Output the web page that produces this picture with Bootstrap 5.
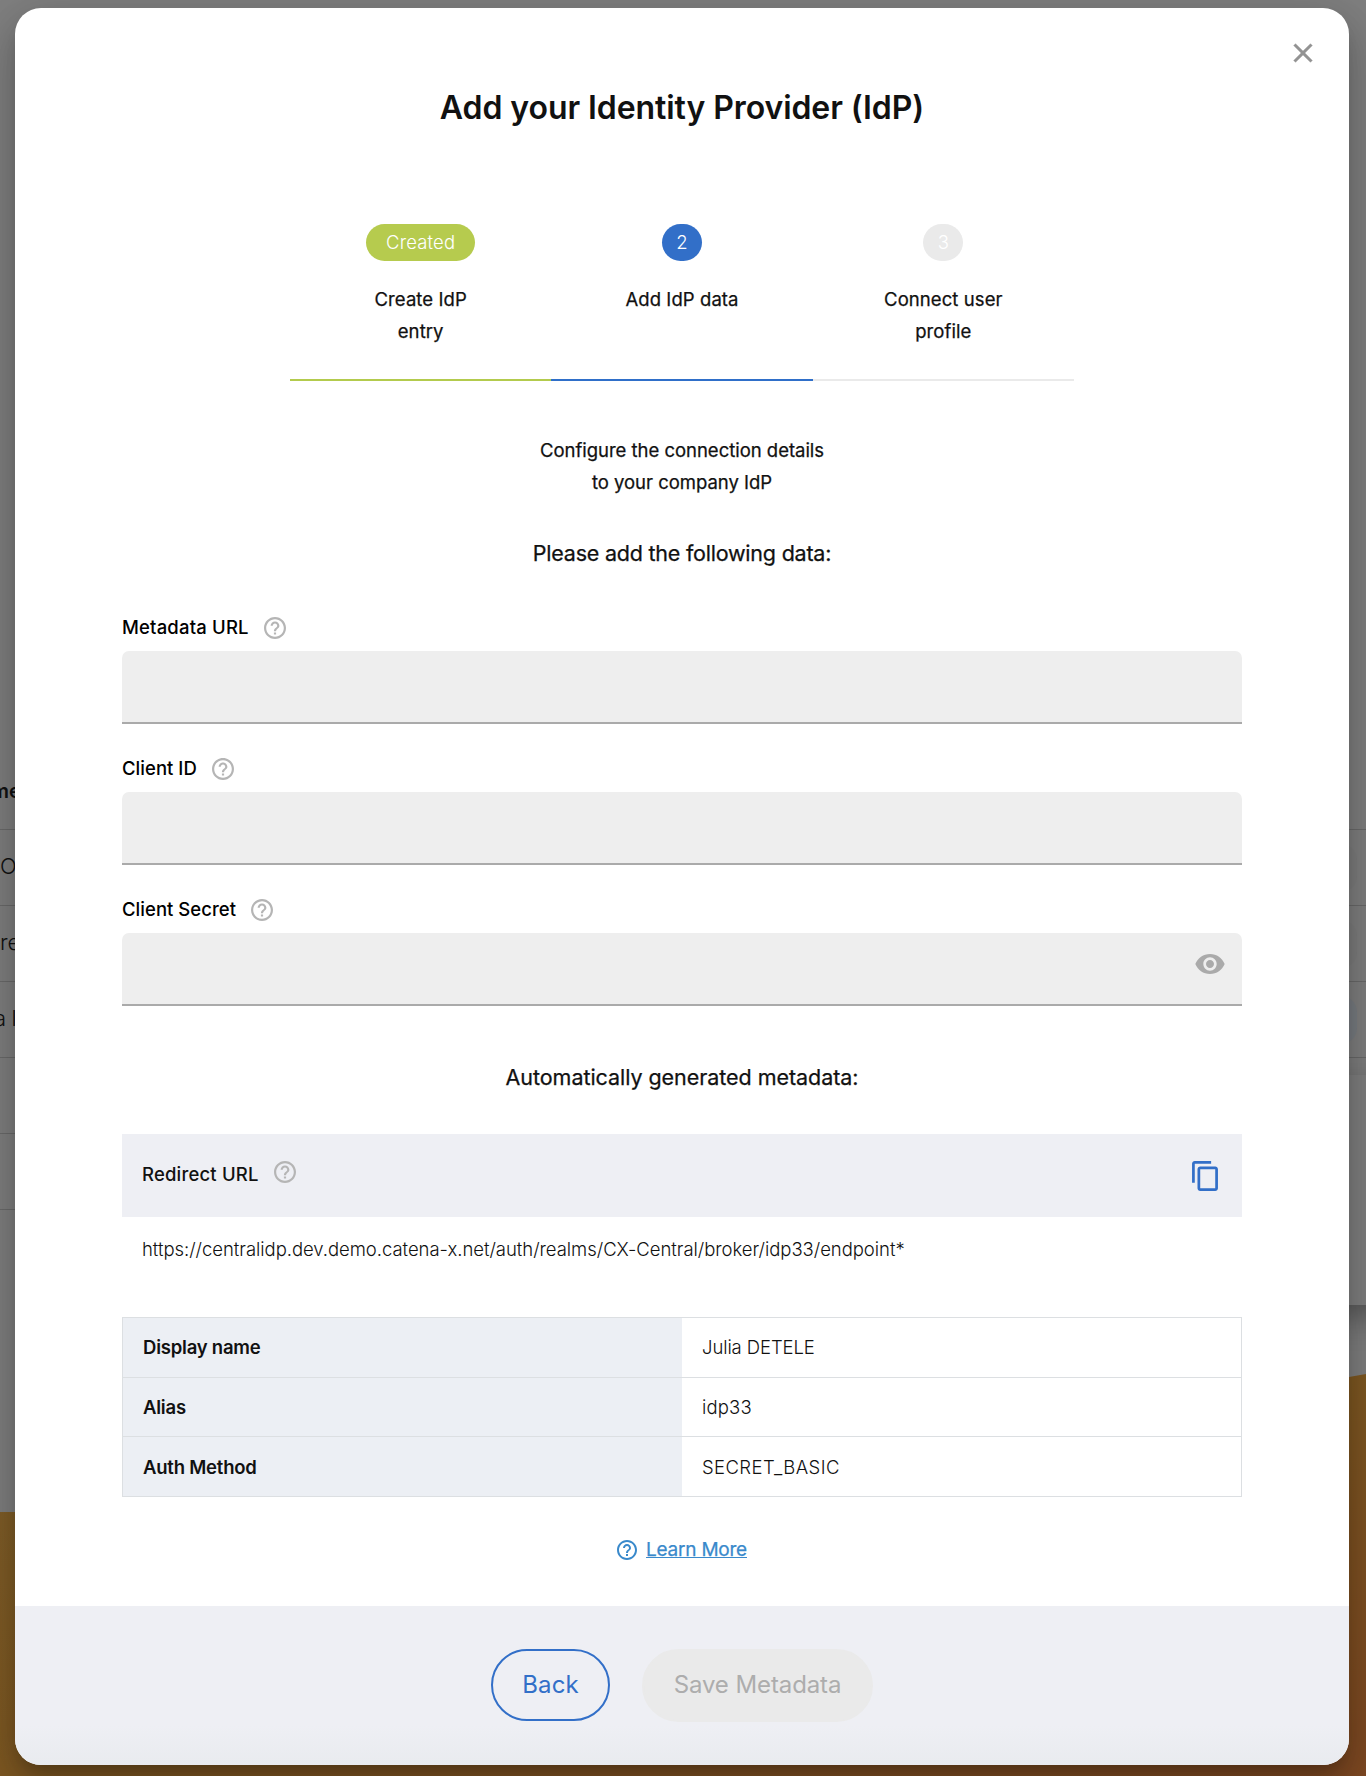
<!DOCTYPE html>
<html lang="en">
<head>
<meta charset="utf-8">
<meta name="viewport" content="width=device-width, initial-scale=1">
<title>Add your Identity Provider (IdP)</title>
<link href="https://cdn.jsdelivr.net/npm/bootstrap@5.3.0/dist/css/bootstrap.min.css" rel="stylesheet">
<style>
body{font-family:Inter,"Liberation Sans",sans-serif;font-size:18.5px;line-height:28px;color:#111;width:1366px;height:1776px;overflow:hidden;background:#7f7f7f}
.page-behind{position:absolute;inset:0;overflow:hidden;padding-top:754px;font-size:22px;font-weight:300}
.page-behind .hill{position:absolute;left:0;top:0}
.behind-row{height:76px;border-bottom:1px solid #6a6a6a;line-height:26px;padding-top:23px;white-space:nowrap;position:relative}
.behind-row.half{width:600px}
.behind-row b{font-weight:600;font-size:20px}
.behind-pill{position:absolute;right:9px;top:14px;width:80px;height:48px;border-radius:16px;background:#7d7d7d}
.behind-pill.tinted{background:#797d82}
.behind-card{position:absolute;left:700px;right:-40px;top:1075px;height:230px;background:#7f7f7f;box-shadow:0 14px 30px -2px rgba(0,0,0,.32)}
.dialog-sheet{position:relative;width:1334px;height:1757px;margin:8px 0 0 15px;background:#fff;border-radius:26px;overflow:hidden;box-shadow:0 11px 15px -7px rgba(0,0,0,.2),0 24px 38px 3px rgba(0,0,0,.14),0 9px 46px 8px rgba(0,0,0,.12)}
.dialog-main{height:1598px;padding:80px 107px 0}
.close-btn{position:absolute;right:30px;top:29px;line-height:0}
h1{font-size:32px;line-height:40px;font-weight:600;letter-spacing:-.08px;margin-bottom:96px}
.steps{width:784px}
.step{flex:1 0 0;height:157px;border-bottom:2px solid #eaeaea;font-weight:400;line-height:32px;letter-spacing:.08px}
.step div,.intro,h2{-webkit-text-stroke:.25px #111}
.step span{display:inline-block;height:37px;line-height:37px;min-width:40px;border-radius:20px;background:#eaeaea;color:#fff;font-weight:300;margin-bottom:22px}
.step.done{border-color:#b3cb4d}.step.done span{background:#b6cb4e;padding:0 20px;letter-spacing:.15px}
.step.active{border-color:#2f6fc9}.step.active span{background:#326fc8}
.intro{line-height:32px;margin:53px 0 39px;letter-spacing:-.02px}
h2{font-size:21.5px;line-height:32px;font-weight:400;margin:0;letter-spacing:-.22px}
h2.auto-title{margin:55px 0 41px;letter-spacing:-.05px}
.field{margin-bottom:30px}
.field label{height:28px;gap:15px;font-weight:500;color:#000;letter-spacing:.03px}
.field label svg{margin-top:2px}
.w-url{letter-spacing:.18px}
.redirect-label{font-weight:500;margin-top:-4px}
.field-box{height:73px;margin-top:10px;background:#eee;border-bottom:2px solid #aaa;border-radius:7px 7px 0 0;padding:0 16px 9px}
.url-bar{height:83px;background:#eeeff4;padding:0 24px 0 20px}
.url-text{font-weight:300;padding:18px 20px 0;margin-bottom:54px;letter-spacing:-.04px}
.meta{height:180px;border:1px solid #dcdfe2;font-size:18.5px}
.meta-row{flex:1 1 0;border-bottom:1px solid #dcdfe2}
.meta-row:last-child{border-bottom:0}
.meta-row>*{width:50%;display:flex;align-items:center;padding-left:20px}
.meta dt{background:#eceff4;font-weight:600;letter-spacing:-.22px}
.meta dd{margin:0;font-weight:300;letter-spacing:-.1px}
.meta dd.w-id{letter-spacing:.15px}
.meta dd.w-method{letter-spacing:.4px}
.learn{margin-top:38px;font-size:19px;color:#3989cb}
.learn svg{margin:1px 9px 0 0}
.learn a{color:#3989cb;letter-spacing:-.22px;text-underline-offset:1px;text-decoration-thickness:1px;padding-top:1px;-webkit-text-stroke:.25px #3989cb}
.dialog-foot{height:159px;padding-top:43px;gap:32px;background:linear-gradient(#eeeff4 75%,#e9ebef)}
.btn-cx{height:73px;border-radius:37px;font-size:24px;font-weight:400;padding:0;border:2px solid}
.btn-back{height:72px;width:119px;color:#326fc8;border-color:#326fc8;font-weight:400;letter-spacing:.1px}
.btn-save,.btn-save:disabled{width:231px;padding-bottom:2px;background:#eaeaea;border-color:#eaeaea;color:#adadad;opacity:1;letter-spacing:-.1px}
</style>
</head>
<body>
<svg width="0" height="0" class="position-absolute"><defs>
<symbol id="help" viewBox="2 2 20 20"><path fill="currentColor" d="M11 18h2v-2h-2v2zm1-16C6.480 2 2 6.480 2 12s4.480 10 10 10 10-4.480 10-10S17.520 2 12 2zm0 18c-4.410 0-8-3.590-8-8s3.590-8 8-8 8 3.590 8 8-3.590 8-8 8zm0-14c-2.210 0-4 1.790-4 4h2c0-1.100.9-2 2-2s2 .9 2 2c0 2-3 1.750-3 5h2c0-2.250 3-2.500 3-5 0-2.210-1.790-4-4-4z"/></symbol>
</defs></svg>

<div class="page-behind" aria-hidden="true">
  <svg class="hill" width="1366" height="1776"><defs><linearGradient id="hg" x1="0" y1="0" x2="1" y2="1"><stop offset="0" stop-color="#80602a"/><stop offset=".5" stop-color="#7e5822"/><stop offset="1" stop-color="#7e4822"/></linearGradient></defs><path d="M0 1512H400L1349 1377L1366 1374V1776H0Z" fill="url(#hg)"/></svg>
  <div class="behind-row d-flex"><div style="margin-left:-9px"><b>me</b></div></div>
  <div class="behind-row">O<span class="behind-pill"></span></div>
  <div class="behind-row">re<span class="behind-pill"></span></div>
  <div class="behind-row"><span style="margin-left:-6px;letter-spacing:-.5px">a I</span><span class="behind-pill tinted"></span></div>
  <div class="behind-row half"></div>
  <div class="behind-row half"></div>
  <div class="behind-card"></div>
</div>

<main class="dialog-sheet">
  <div class="dialog-main">
    <a class="close-btn" role="button" aria-label="Close"><svg width="32" height="32" viewBox="0 0 24 24" fill="#939393" stroke="#939393" stroke-width=".3"><path d="M19 6.410L17.590 5 12 10.590 6.410 5 5 6.410 10.590 12 5 17.590 6.410 19 12 13.410 17.590 19 19 17.590 13.410 12z"/></svg></a>
    <h1 class="text-center">Add your Identity Provider (IdP)</h1>
    <div class="steps d-flex mx-auto text-center">
      <div class="step done"><span>Created</span><div>Create IdP<br>entry</div></div>
      <div class="step active"><span>2</span><div>Add IdP data</div></div>
      <div class="step"><span>3</span><div>Connect user<br>profile</div></div>
    </div>
    <p class="intro text-center">Configure the connection details<br>to your company IdP</p>
    <h2 class="text-center" style="margin-bottom:44px">Please add the following data:</h2>

    <div class="field"><label class="d-flex align-items-center"><span class="w-url">Metadata URL</span><svg width="22" height="22" color="#b5b5b5"><use href="#help"/></svg></label><div class="field-box"></div></div>
    <div class="field"><label class="d-flex align-items-center"><span>Client ID</span><svg width="22" height="22" color="#b5b5b5"><use href="#help"/></svg></label><div class="field-box"></div></div>
    <div class="field mb-0"><label class="d-flex align-items-center"><span>Client Secret</span><svg width="22" height="22" color="#b5b5b5"><use href="#help"/></svg></label>
      <div class="field-box d-flex align-items-center justify-content-end"><svg width="32" height="32" viewBox="0 0 24 24" fill="#aaa"><path d="M12 4.500C7 4.500 2.730 7.610 1 12c1.730 4.390 6 7.500 11 7.500s9.270-3.110 11-7.500c-1.730-4.390-6-7.500-11-7.500zM12 17c-2.760 0-5-2.240-5-5s2.240-5 5-5 5 2.240 5 5-2.240 5-5 5zm0-8c-1.660 0-3 1.340-3 3s1.340 3 3 3 3-1.340 3-3-1.340-3-3-3z"/></svg></div></div>

    <h2 class="auto-title text-center">Automatically generated metadata:</h2>
    <div class="url-bar d-flex align-items-center justify-content-between">
      <div class="d-flex align-items-center" style="gap:15px"><span class="w-url redirect-label">Redirect URL</span><svg width="22" height="22" color="#b5b5b5" style="margin-top:-7px"><use href="#help"/></svg></div>
      <svg width="26" height="30" viewBox="2 1 19 22" fill="#326fc8"><path d="M16 1H4c-1.100 0-2 .9-2 2v14h2V3h12V1zm3 4H8c-1.100 0-2 .9-2 2v14c0 1.100.9 2 2 2h11c1.100 0 2-.9 2-2V7c0-1.100-.9-2-2-2zm0 16H8V7h11v14z"/></svg>
    </div>
    <p class="url-text">https://centralidp.dev.demo.catena-x.net/auth/realms/CX-Central/broker/idp33/endpoint*</p>
    <dl class="meta d-flex flex-column mb-0">
      <div class="meta-row d-flex"><dt>Display name</dt><dd>Julia DETELE</dd></div>
      <div class="meta-row d-flex"><dt>Alias</dt><dd class="w-id">idp33</dd></div>
      <div class="meta-row d-flex"><dt>Auth Method</dt><dd class="w-method">SECRET_BASIC</dd></div>
    </dl>
    <div class="learn d-flex justify-content-center align-items-center"><svg width="20" height="20"><use href="#help"/></svg><a href="#">Learn More</a></div>
  </div>
  <div class="dialog-foot d-flex justify-content-center align-items-start">
    <button class="btn btn-cx btn-back" type="button">Back</button>
    <button class="btn btn-cx btn-save" type="button" disabled>Save Metadata</button>
  </div>
</main>
</body>
</html>
